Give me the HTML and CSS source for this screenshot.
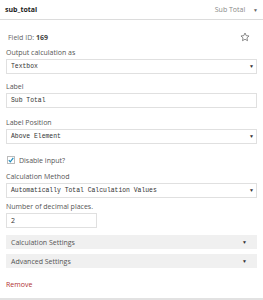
FILE: index.html
```html
<!DOCTYPE html>
<html lang="en">
<head>
    <meta charset="UTF-8">
    <title>sub_total</title>
    <link rel="stylesheet" href="styles.css">
</head>
<body>
    <div class="field">
        <div class="field-header">
            <span class="field-key">sub_total</span>
            <span class="field-type">Sub Total <span class="caret">&#9660;</span></span>
        </div>

        <div class="field-body">
            <div class="field-id-row">
                <span class="field-id">Field ID: <strong>169</strong></span>
                <svg class="star" width="10" height="10" viewBox="0 0 24 24">
                    <path d="M12 2.5l2.9 6.2 6.8.8-5 4.6 1.3 6.7L12 17.5l-6 3.3 1.3-6.7-5-4.6 6.8-.8z" fill="none" stroke="#555" stroke-width="1.6" stroke-linejoin="round"/>
                </svg>
            </div>

            <div class="row first">
                <label>Output calculation as</label>
                <div class="select mono">Textbox<span class="caret">&#9660;</span></div>
            </div>

            <div class="row">
                <label>Label</label>
                <div class="input mono">Sub Total</div>
            </div>

            <div class="row wide">
                <label>Label Position</label>
                <div class="select mono">Above Element<span class="caret">&#9660;</span></div>
            </div>

            <div class="check-row">
                <svg class="checkbox" width="8" height="8" viewBox="0 0 8 8">
                    <rect x="0.5" y="0.5" width="7" height="7" fill="#fff" stroke="#bbb"/>
                    <path d="M1.8 4.2l1.5 1.6 3-4" fill="none" stroke="#1e8cbe" stroke-width="1.2"/>
                </svg>
                <span>Disable input?</span>
            </div>

            <div class="row tight">
                <label>Calculation Method</label>
                <div class="select mono">Automatically Total Calculation Values<span class="caret">&#9660;</span></div>
            </div>

            <div class="row tighter">
                <label>Number of decimal places.</label>
                <div class="input small">2</div>
            </div>

            <div class="sections">
                <div class="section">Calculation Settings<span class="caret">&#9660;</span></div>
                <div class="section">Advanced Settings<span class="caret">&#9660;</span></div>
            </div>

            <a class="remove" href="#">Remove</a>
        </div>
    </div>
</body>
</html>
```

FILE: styles.css
```css
body {
    margin: 0;
    font-family: 'Open Sans', sans-serif;
    font-size: 7px;
    color: #444;
    background: #fff;
}
.field {
    box-sizing: border-box;
    height: 300px;
    border-bottom: 2px solid #e2e2e2;
}
.field-header {
    display: flex;
    justify-content: space-between;
    align-items: center;
    height: 19px;
    padding: 0 5px;
    border-bottom: 1px solid #dcdcdc;
}
.field-key {
    font-weight: bold;
    color: #222;
}
.field-type {
    color: #888;
}
.field-type .caret {
    margin-left: 6px;
    color: #666;
}
.caret {
    font-size: 5px;
    color: #333;
}
.field-body {
    padding: 0 6px;
}
.field-id-row {
    display: flex;
    justify-content: space-between;
    align-items: center;
    height: 12px;
    margin-top: 11px;
    padding-left: 2px;
}
.field-id {
    color: #666;
}
.field-id strong {
    color: #444;
}
.star {
    margin-right: 7px;
}
.row {
    margin-top: 8px;
}
.row.first {
    margin-top: 5px;
}
.row.wide {
    margin-top: 10px;
}
.row.tight {
    margin-top: 7px;
}
.row.tighter {
    margin-top: 4px;
}
.row label {
    display: block;
    height: 11px;
    line-height: 10px;
    color: #555;
}
.select,
.input {
    display: flex;
    justify-content: space-between;
    align-items: center;
    box-sizing: border-box;
    height: 15px;
    padding: 0 3px 0 4px;
    border: 1px solid #e0e0e0;
    background: #fff;
    color: #333;
}
.mono {
    font-family: 'Liberation Mono', monospace;
    font-size: 6.4px;
}
.input.small {
    width: 91px;
}
.check-row {
    display: flex;
    align-items: center;
    gap: 4px;
    height: 10px;
    margin-top: 11px;
    padding-left: 1px;
    color: #555;
}
.sections {
    display: flex;
    flex-direction: column;
    gap: 5px;
    margin-top: 7px;
}
.section {
    display: flex;
    justify-content: space-between;
    align-items: center;
    height: 14px;
    padding: 0 10px 0 5px;
    background: #f0f0f0;
    color: #555;
}
.remove {
    display: block;
    height: 10px;
    line-height: 10px;
    margin-top: 12px;
    color: #b03030;
    text-decoration: none;
}
```
